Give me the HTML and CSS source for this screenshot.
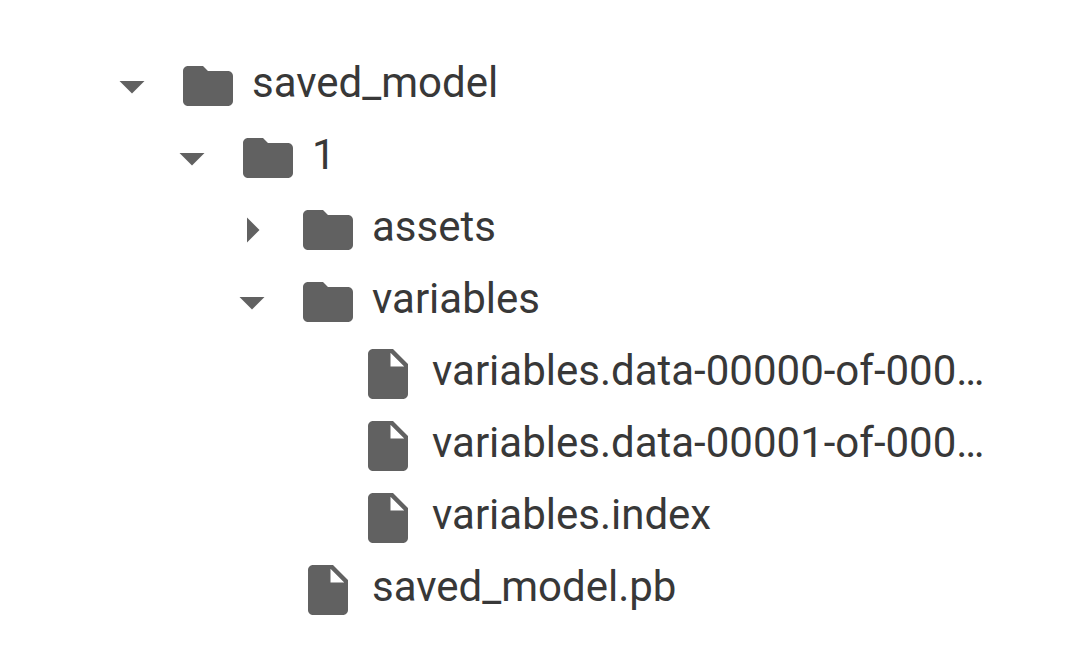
FILE: index.html
```html
<!DOCTYPE html>
<html lang="en">
<head>
<meta charset="utf-8">
<title>saved_model</title>
<link rel="stylesheet" href="styles.css">
</head>
<body>
<svg class="sprite" aria-hidden="true">
  <symbol id="down" viewBox="0 0 24 24"><path d="M7 10l5 5 5-5z"/></symbol>
  <symbol id="right" viewBox="0 0 24 24"><path d="M10 17l5-5-5-5z"/></symbol>
  <symbol id="folder" viewBox="0 0 24 24"><path d="M10 4H4c-1.1 0-1.99.9-1.99 2L2 18c0 1.1.9 2 2 2h16c1.1 0 2-.9 2-2V8c0-1.1-.9-2-2-2h-8z"/></symbol>
  <symbol id="file" viewBox="0 0 24 24"><path d="M6 2c-1.1 0-1.99.9-1.99 2L4 20c0 1.1.89 2 1.99 2H18c1.1 0 2-.9 2-2V8l-6-6H6zm7 7V3.500L18.500 9H13z"/></symbol>
</svg>
<main class="files">
  <ul class="tree">
    <li>
      <div class="row"><button class="toggle" aria-label="Collapse saved_model" aria-expanded="true"><svg class="icon"><use href="#down"/></svg></button><svg class="icon"><use href="#folder"/></svg><span class="name">saved_model</span></div>
      <ul class="branch">
        <li>
          <div class="row"><button class="toggle" aria-label="Collapse 1" aria-expanded="true"><svg class="icon"><use href="#down"/></svg></button><svg class="icon"><use href="#folder"/></svg><span class="name">1</span></div>
          <ul class="branch">
            <li>
              <div class="row"><button class="toggle" aria-label="Expand assets" aria-expanded="false"><svg class="icon"><use href="#right"/></svg></button><svg class="icon"><use href="#folder"/></svg><span class="name">assets</span></div>
            </li>
            <li>
              <div class="row"><button class="toggle" aria-label="Collapse variables" aria-expanded="true"><svg class="icon"><use href="#down"/></svg></button><svg class="icon"><use href="#folder"/></svg><span class="name">variables</span></div>
              <ul class="branch">
                <li class="row leaf"><svg class="icon"><use href="#file"/></svg><span class="name">variables.data-00000-of-00002</span></li>
                <li class="row leaf"><svg class="icon"><use href="#file"/></svg><span class="name">variables.data-00001-of-00002</span></li>
                <li class="row leaf"><svg class="icon"><use href="#file"/></svg><span class="name">variables.index</span></li>
              </ul>
            </li>
            <li class="row leaf"><svg class="icon"><use href="#file"/></svg><span class="name">saved_model.pb</span></li>
          </ul>
        </li>
      </ul>
    </li>
  </ul>
</main>
</body>
</html>
```
FILE: styles.css
```css
body {
  margin: 0;
  background: #fff;
  color: #383838;
  font: 42px/72px Roboto, sans-serif;
}
.sprite {
  display: none;
}
.files {
  padding: 47px 84px 25px 102px;
}
.tree,
.branch {
  margin: 0;
  padding: 0;
  list-style: none;
}
.branch {
  padding-left: 60px;
}
.row {
  display: flex;
  align-items: center;
  height: 72px;
}
.toggle {
  display: flex;
  margin: 0 16px 0 0;
  padding: 0;
  border: 0;
  background: none;
}
.leaf {
  padding-left: 76px;
}
.icon {
  flex: none;
  width: 60px;
  height: 60px;
  margin-top: 6px;
  fill: #616161;
}
.name {
  min-width: 0;
  margin-left: 14px;
  overflow: hidden;
  text-overflow: ellipsis;
  white-space: nowrap;
}
```
